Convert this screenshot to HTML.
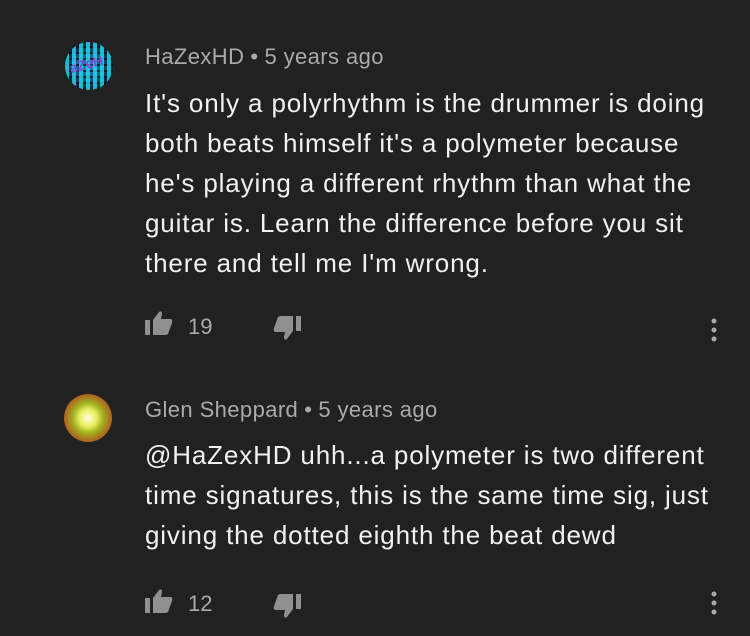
<!DOCTYPE html>
<html><head><meta charset="utf-8"><style>
body{margin:0;width:750px;height:636px;background:#212121;font-family:"Liberation Sans",Roboto,sans-serif;position:relative;overflow:hidden}
.av{position:absolute;width:48px;height:48px;border-radius:50%}
.meta{position:absolute;left:145px;font-size:22px;color:#aaa;white-space:nowrap;letter-spacing:0.4px}
.meta b{font-weight:normal;margin:0 6px}
.body{position:absolute;left:145px;font-size:26px;line-height:40px;color:#f1f1f1;white-space:nowrap;letter-spacing:0.85px}
.cnt{position:absolute;font-size:22px;color:#aaa}
svg{position:absolute}
</style></head><body>
<div class="av" style="left:65px;top:42px;background:radial-gradient(circle,#1a8fb0 0,#0c5c7a 40%,#071a22 75%);overflow:hidden">
<div style="position:absolute;inset:0;background:repeating-linear-gradient(90deg,rgba(40,220,255,.8) 0 4px,transparent 4px 7px),repeating-linear-gradient(0deg,rgba(0,0,0,.6) 0 2px,transparent 2px 6px)"></div>
<div style="position:absolute;left:4px;top:14px;font-size:14px;color:#7b4bd8;font-weight:bold;transform:rotate(-15deg)">aZeH</div></div>
<div class="meta" style="top:44px">HaZexHD<b>•</b>5 years ago</div>
<div class="body" style="top:83px">It's only a polyrhythm is the drummer is doing<br>both beats himself it's a polymeter because<br>he's playing a different rhythm than what the<br>guitar is. Learn the difference before you sit<br>there and tell me I'm wrong.</div>
<svg style="left:145px;top:310px" width="28" height="26" viewBox="0 0 28 26"><rect x="0" y="10" width="5" height="15" fill="#909090"/><path d="M8 10 L14 2 Q17 0 17 4 L16 9 H26 Q28 10 27 13 L23 24 Q22 25 20 25 H8 Z" fill="#909090"/></svg>
<div class="cnt" style="left:188px;top:314px">19</div>
<svg style="left:273px;top:315px" width="28" height="26" viewBox="0 0 28 26" transform="rotate(180)"><rect x="0" y="10" width="5" height="15" fill="#909090"/><path d="M8 10 L14 2 Q17 0 17 4 L16 9 H26 Q28 10 27 13 L23 24 Q22 25 20 25 H8 Z" fill="#909090"/></svg>
<svg style="left:710px;top:317px" width="8" height="26"><circle cx="4" cy="4" r="2.5" fill="#aaa"/><circle cx="4" cy="13" r="2.5" fill="#aaa"/><circle cx="4" cy="22" r="2.5" fill="#aaa"/></svg>

<div class="av" style="left:64px;top:394px;background:radial-gradient(circle,#ffffe0 0,#e8f060 25%,#a0b020 45%,#b06020 70%,#402010 100%)"></div>
<div class="meta" style="top:397px">Glen Sheppard<b>•</b>5 years ago</div>
<div class="body" style="top:435px">@HaZexHD uhh...a polymeter is two different<br>time signatures, this is the same time sig, just<br>giving the dotted eighth the beat dewd</div>
<svg style="left:145px;top:588px" width="28" height="26" viewBox="0 0 28 26"><rect x="0" y="10" width="5" height="15" fill="#909090"/><path d="M8 10 L14 2 Q17 0 17 4 L16 9 H26 Q28 10 27 13 L23 24 Q22 25 20 25 H8 Z" fill="#909090"/></svg>
<div class="cnt" style="left:188px;top:591px">12</div>
<svg style="left:273px;top:593px" width="28" height="26" viewBox="0 0 28 26" transform="rotate(180)"><rect x="0" y="10" width="5" height="15" fill="#909090"/><path d="M8 10 L14 2 Q17 0 17 4 L16 9 H26 Q28 10 27 13 L23 24 Q22 25 20 25 H8 Z" fill="#909090"/></svg>
<svg style="left:710px;top:590px" width="8" height="26"><circle cx="4" cy="4" r="2.5" fill="#aaa"/><circle cx="4" cy="13" r="2.5" fill="#aaa"/><circle cx="4" cy="22" r="2.5" fill="#aaa"/></svg>
</body></html>
